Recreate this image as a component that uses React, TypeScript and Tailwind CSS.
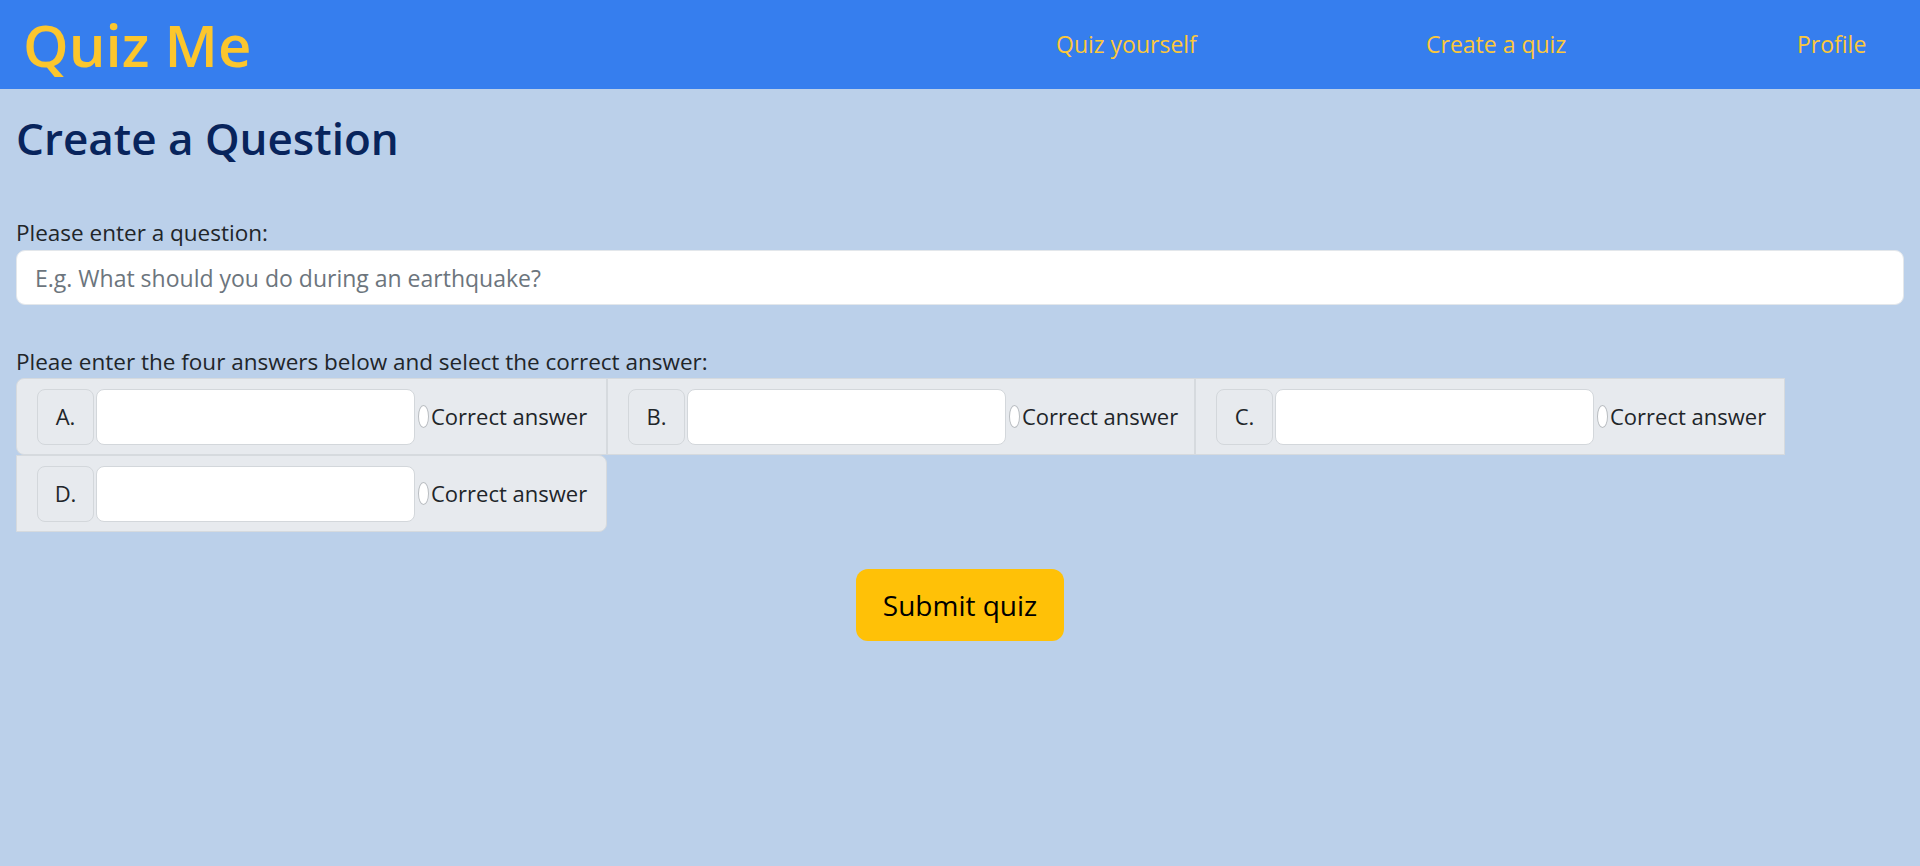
import { useState } from "react";

type Answer = { letter: string; width: string };

const answers: Answer[] = [
  { letter: "A.", width: "w-[591px]" },
  { letter: "B.", width: "w-[588px]" },
  { letter: "C.", width: "w-[590px]" },
  { letter: "D.", width: "w-[591px]" },
];

const NavBar = () => {
  return (
    <nav className="flex h-[89px] items-center bg-[#367eee]">
      <a
        href="#"
        className="ml-[23px] text-[58px] font-semibold leading-none text-[#fcc62d]"
      >
        Quiz Me
      </a>
      <ul className="ml-auto flex items-center text-[23px] text-[#fdc83a]">
        <li className="w-[370px]">
          <a href="#">Quiz yourself</a>
        </li>
        <li className="w-[371px]">
          <a href="#">Create a quiz</a>
        </li>
        <li className="w-[123px]">
          <a href="#">Profile</a>
        </li>
      </ul>
    </nav>
  );
};

const AnswerBox = ({
  answer,
  checked,
  onCheck,
}: {
  answer: Answer;
  checked: boolean;
  onCheck: () => void;
}) => {
  return (
    <div
      className={`flex h-[77px] items-center border border-[#d6dade] bg-[#e7eaee] pl-[20px] text-[22px] ${answer.width} ${
        answer.letter === "A." ? "rounded-l-[8px]" : ""
      } ${answer.letter === "D." ? "rounded-r-[8px]" : ""}`}
    >
      <span className="flex h-[56px] w-[57px] items-center justify-center rounded-[8px] border border-[#d3d7db] bg-[#e7eaee] text-[#212529]">
        {answer.letter}
      </span>
      <input
        type="text"
        className="ml-[2px] h-[56px] w-[319px] rounded-[8px] border border-[#d3d7db] bg-white px-3 outline-none"
      />
      <input
        type="radio"
        name="correct"
        checked={checked}
        onChange={onCheck}
        className="ml-[3px] h-[23px] w-[11px] appearance-none rounded-[50%] border border-[#b9bdc1] bg-white checked:bg-[#0d6efd]"
      />
      <span className="ml-[2px] whitespace-nowrap text-[#212529]">
        Correct answer
      </span>
    </div>
  );
};

export default function App() {
  const [correct, setCorrect] = useState<string | null>(null);

  return (
    <div
      className="min-h-[866px] bg-[#bbd0ea] text-[22.5px] text-[#212529]"
      style={{ fontFamily: '"Open Sans", "Noto Sans", sans-serif' }}
    >
      <NavBar />

      <main className="px-4">
        <h1 className="mt-[23px] text-[44px] font-semibold leading-[52px] text-[#08245c]">
          Create a Question
        </h1>

        {/* Question */}
        <label className="mt-[52px] block leading-[33px]">
          Please enter a question:
        </label>
        <input
          type="text"
          placeholder="E.g. What should you do during an earthquake?"
          className="mt-px block h-[55px] w-full rounded-[9px] border border-[#e3e7eb] bg-white px-[18px] text-[23px] outline-none placeholder:text-[#6c757d]"
        />

        {/* Answers */}
        <p className="mt-[40px] leading-[33px]">
          Pleae enter the four answers below and select the correct answer:
        </p>
        <div className="flex flex-wrap">
          {answers.map((a) => (
            <AnswerBox
              key={a.letter}
              answer={a}
              checked={correct === a.letter}
              onCheck={() => setCorrect(a.letter)}
            />
          ))}
        </div>

        <div className="mt-[37px] flex justify-center">
          <button className="h-[72px] w-[208px] rounded-[12px] bg-[#ffc107] text-[28px] text-black">
            Submit quiz
          </button>
        </div>
      </main>
    </div>
  );
}
